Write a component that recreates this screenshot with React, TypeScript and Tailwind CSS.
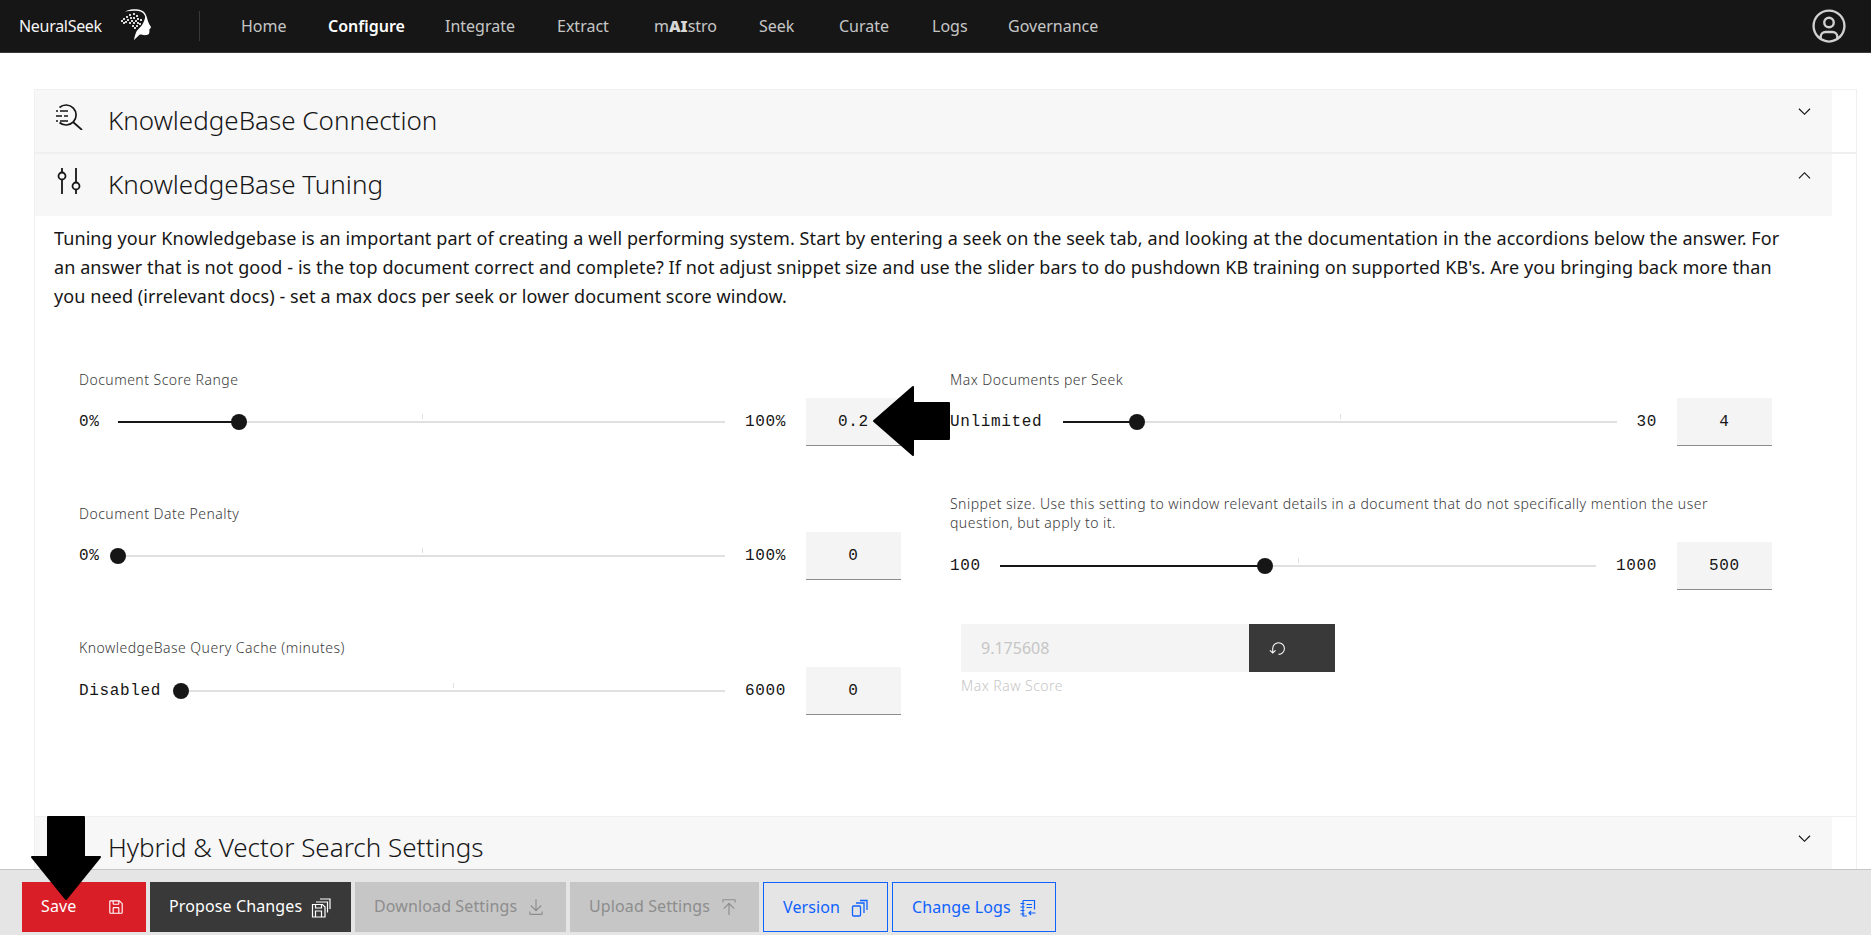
import type { ReactNode } from "react";

const SANS = "font-['Noto_Sans','Liberation_Sans',sans-serif]";
const MONO = "font-['Liberation_Mono',monospace]";

const navItems = [
  { label: <>Home</>, width: "w-[87px]" },
  { label: <span className="font-semibold text-white">Configure</span>, width: "w-[117px]" },
  { label: <>Integrate</>, width: "w-[112px]" },
  { label: <>Extract</>, width: "w-[97px]" },
  { label: <>m<span className="font-black text-[#d8d8d8]">AI</span>stro</>, width: "w-[105px]" },
  { label: <>Seek</>, width: "w-[80px]" },
  { label: <>Curate</>, width: "w-[93px]" },
  { label: <>Logs</>, width: "w-[76px]" },
  { label: <>Governance</>, width: "w-[100px]" },
];

function Icon({ size = 16, children, className }: { size?: number; children: ReactNode; className?: string }) {
  return (
    <svg width={size} height={size} viewBox="0 0 32 32" fill="currentColor" className={className} aria-hidden="true">
      {children}
    </svg>
  );
}

function SaveIcon() {
  return (
    <Icon size={18}>
      <path d="M27.71,9.29l-5-5A1,1,0,0,0,22,4H6A2,2,0,0,0,4,6V26a2,2,0,0,0,2,2H26a2,2,0,0,0,2-2V10A1,1,0,0,0,27.71,9.29ZM12,6h8v4H12Zm8,20H12V18h8Zm2,0V18a2,2,0,0,0-2-2H12a2,2,0,0,0-2,2v8H6V6h4v4a2,2,0,0,0,2,2h8a2,2,0,0,0,2-2V6.41l4,4V26Z" />
    </Icon>
  );
}

function SaveSeriesIcon() {
  return (
    <svg width="20" height="20" viewBox="0 0 20 20" fill="none" stroke="currentColor" strokeWidth="1.2" aria-hidden="true">
      <path d="M1.500 6.500h10l2.500 2.500V19H1.500z" />
      <path d="M4.500 6.500v3.500h6V6.500M4.500 19v-6h6v6" />
      <path d="M5 4h11.500v10.500M9 1h10v10" />
    </svg>
  );
}

function DownloadIcon() {
  return (
    <Icon size={18}>
      <path d="M26,24v4H6V24H4v4H4a2,2,0,0,0,2,2H26a2,2,0,0,0,2-2h0V24Z" />
      <path d="M26 14 24.59 12.59 17 20.17 17 2 15 2 15 20.17 7.41 12.59 6 14 16 24 26 14z" />
    </Icon>
  );
}

function UploadIcon() {
  return (
    <Icon size={18}>
      <path d="M6 18 7.41 19.41 15 11.83 15 30 17 30 17 11.83 24.59 19.41 26 18 16 8 6 18z" />
      <path d="M6,8V4H26V8h2V4a2,2,0,0,0-2-2H6A2,2,0,0,0,4,4V8Z" />
    </Icon>
  );
}

function VersionIcon() {
  return (
    <svg width="18" height="18" viewBox="0 0 18 18" fill="none" stroke="currentColor" strokeWidth="1.300" aria-hidden="true">
      <rect x="2.500" y="7" width="8" height="10" rx="1" />
      <path d="M6 4h8v10" />
      <path d="M10 1.500h7V11" />
    </svg>
  );
}

function ChangeLogIcon() {
  return (
    <svg width="18" height="18" viewBox="0 0 18 18" fill="none" stroke="currentColor" strokeWidth="1.200" aria-hidden="true">
      <path d="M4 1.500h11.500v9M8 17H4V1.500" />
      <path d="M1.500 4.500h4M1.500 8h4M1.500 11.500h4M1.500 15h4" />
      <path d="M7.500 5.500h5.500M7.500 8.500h5.500" />
      <path d="M16.500 14H10M12 12l-2 2 2 2" />
    </svg>
  );
}

function Chevron({ up }: { up?: boolean }) {
  return (
    <Icon size={19} className={up ? "rotate-180" : ""}>
      <path d="M16 22 6 12 7.400 10.600 16 19.200 24.600 10.600 26 12 16 22z" />
    </Icon>
  );
}

function Logo() {
  const dots = [
    [9, 5], [13, 4], [16, 6], [6, 7], [10, 8], [13, 8], [17, 9], [20, 10], [3, 9], [7, 10], [11, 11], [15, 11],
    [1, 11], [5, 12], [9, 13], [13, 13], [17, 13], [19, 14], [12, 16], [16, 16], [14, 18], [3, 13],
  ];
  return (
    <svg width="32" height="34" viewBox="0 0 32 34" aria-hidden="true">
      <path
        d="M5 2.500C9 .5 13 0 16.700.3 21 .8 24 2 25.500 5c1.800 3.500 2 7 3.800 10.300L31 18c-.2 1.300-1 1.800-1.700 2.300.3 1.400.2 3-.4 4.700-1.800 1.200-4 1.300-5.600 1-1.500-.2-2.800-.4-3.500-.5L14 31c.5-3.500 1.500-6.500 2.700-9 2.300-3 5.300-5 6.600-8.300C24.500 11 25.500 9 25 7c-1-3-4-4.500-6.700-5C14 1.300 9 1.800 5 2.500z"
        fill="#fff"
      />
      {dots.map(([x, y]) => (
        <rect key={`${x}-${y}`} x={x} y={y} width="2" height="2" fill="#d8d8d8" />
      ))}
    </svg>
  );
}

function ActionButton({
  className,
  iconLeft,
  textLeft,
  children,
  icon,
}: {
  className: string;
  iconLeft: string;
  textLeft: string;
  children: ReactNode;
  icon: ReactNode;
}) {
  return (
    <button type="button" className={`relative h-[50px] shrink-0 text-base tracking-[0.12px] ${className}`}>
      <span className={`absolute top-[12px] whitespace-nowrap leading-6 ${textLeft}`}>{children}</span>
      <span className={`absolute top-[16px] ${iconLeft}`}>{icon}</span>
    </button>
  );
}

function Slider({
  label,
  minLabel,
  maxLabel,
  value,
  percent,
  labelClass = "mb-[9px]",
  minWidth,
  maxWidth,
}: {
  label: string;
  minLabel: string;
  maxLabel: string;
  value: string;
  percent: number;
  labelClass?: string;
  minWidth: string;
  maxWidth: string;
}) {
  return (
    <div>
      <div className={`text-[14px] font-light leading-[19px] tracking-[0.48px] text-[#393939] ${labelClass}`}>{label}</div>
      <div className="flex h-[48px] items-center">
        <span className={`${MONO} shrink-0 text-base tracking-[0.65px] text-[#161616] ${minWidth}`}>{minLabel}</span>
        <div className="relative h-[2px] flex-1 bg-[#e0e0e0]">
          <div className="absolute inset-y-0 left-0 bg-[#161616]" style={{ width: `${percent}%` }} />
          <div className="absolute left-1/2 top-[-7px] h-[5px] w-px bg-[#e0e0e0]" />
          <div
            className="absolute top-[-7px] size-4 -translate-x-1/2 rounded-full bg-[#161616]"
            style={{ left: `${percent}%` }}
          />
        </div>
        <span className={`${MONO} shrink-0 text-right text-base tracking-[0.65px] text-[#161616] ${maxWidth}`}>{maxLabel}</span>
        <div
          className={`${MONO} ml-[20px] flex h-[48px] w-[95px] shrink-0 items-center justify-center border-b border-[#8d8d8d] bg-[#f4f4f4] text-base tracking-[0.65px] text-[#161616]`}
        >
          {value}
        </div>
      </div>
    </div>
  );
}

function AccordionHeader({ icon, title, up }: { icon: ReactNode; title: string; up?: boolean }) {
  return (
    <div className="relative flex h-[62px] w-[1797px] items-center bg-[#f7f7f7] pb-[2px] pl-[73px]">
      <div className="absolute left-[20px] top-[12px]">{icon}</div>
      <h2 className="text-[26px] font-light leading-8 text-[#161616]">{title}</h2>
      <div className="absolute left-[1760px] top-[12px] text-[#161616]">
        <Chevron up={up} />
      </div>
    </div>
  );
}

export default function App() {
  return (
    <div className={`${SANS} relative flex h-screen flex-col overflow-hidden bg-white`}>
      <header className="flex h-[53px] shrink-0 items-center border-b border-[#393939] bg-[#161616] pl-[19px] pr-[23px] text-base text-[#c6c6c6]">
        <span className="w-[101px] tracking-[-0.3px] text-[#f4f4f4]">NeuralSeek</span>
        <Logo />
        <div className="ml-[47px] mr-[41px] h-[30px] w-px bg-[#393939]" />
        <nav className="flex">
          {navItems.map((item, i) => (
            <a key={i} className={`${item.width} whitespace-nowrap`}>
              {item.label}
            </a>
          ))}
        </nav>
        <div className="ml-auto text-[#d0d0d0]">
          <Icon size={38}>
            <path d="M16,8a5,5,0,1,0,5,5A5,5,0,0,0,16,8Zm0,8a3,3,0,1,1,3-3A3.003,3.003,0,0,1,16,16Z" />
            <path d="M16,2A14,14,0,1,0,30,16,14.016,14.016,0,0,0,16,2ZM10,26.377V25a3.003,3.003,0,0,1,3-3h6a3.003,3.003,0,0,1,3,3v1.377a11.899,11.899,0,0,1-12,0Zm13.993-1.451A5.002,5.002,0,0,0,19,20H13a5.002,5.002,0,0,0-4.993,4.926,12,12,0,1,1,15.985,0Z" />
          </Icon>
        </div>
      </header>

      <main className="min-h-0 flex-1 overflow-hidden pl-[34px] pr-[14px] pt-[36px]">
        <div className="border-x border-t border-[#f0f0f0]">
          <AccordionHeader
            title="KnowledgeBase Connection"
            icon={
              <svg width="28" height="28" viewBox="0 0 28 28" fill="none" stroke="#161616" strokeWidth="1.700" aria-hidden="true">
                <path d="M4.500 5.500a10 10 0 1 1 0 15" />
                <path d="M18 20l9 8" />
                <path d="M1 9h2M5 9h8M1 14h6M9 14h4M1 19h2M5 19h8" />
              </svg>
            }
          />
          <div className="h-[2px] bg-[#f0f0f0]" />
          <AccordionHeader
            up
            title="KnowledgeBase Tuning"
            icon={
              <svg width="28" height="30" viewBox="0 0 28 30" fill="none" stroke="#161616" strokeWidth="1.800" aria-hidden="true">
                <path d="M7 2v4.500M7 13.500V28M21 2v14.500M21 23.500V28" />
                <circle cx="7" cy="10" r="3.500" />
                <circle cx="21" cy="20" r="3.500" />
              </svg>
            }
          />
          <div className="h-[600px] pl-[19px] pt-[8px]">
            <p className="text-lg leading-[29px] tracking-[0.09px] text-[#161616]">
              Tuning your Knowledgebase is an important part of creating a well performing system. Start by entering a seek on the seek tab, and looking at the documentation in the accordions below the answer. For
              <br />
              an answer that is not good - is the top document correct and complete? If not adjust snippet size and use the slider bars to do pushdown KB training on supported KB's. Are you bringing back more than
              <br />
              you need (irrelevant docs) - set a max docs per seek or lower document score window.
            </p>

            <div className="mt-[59px] flex pl-[25px]">
              <div className="flex w-[822px] flex-col gap-[58px]">
                <Slider label="Document Score Range" minLabel="0%" maxLabel="100%" value="0.2" percent={20} minWidth="w-[39px]" maxWidth="w-[61px]" />
                <Slider label="Document Date Penalty" minLabel="0%" maxLabel="100%" value="0" percent={0} minWidth="w-[39px]" maxWidth="w-[61px]" />
                <Slider label="KnowledgeBase Query Cache (minutes)" minLabel="Disabled" maxLabel="6000" value="0" percent={0} labelClass="mb-[10px]" minWidth="w-[102px]" maxWidth="w-[61px]" />
              </div>
              <div className="ml-[49px] w-[822px]">
                <Slider label="Max Documents per Seek" minLabel="Unlimited" maxLabel="30" value="4" percent={13.3} minWidth="w-[113px]" maxWidth="w-[40px]" />
                <div className="mt-[48px]">
                  <Slider
                    label="Snippet size. Use this setting to window relevant details in a document that do not specifically mention the user question, but apply to it."
                    minLabel="100"
                    maxLabel="1000"
                    value="500"
                    percent={44.4}
                    labelClass="mb-[10px] max-w-[790px]"
                    minWidth="w-[50px]"
                    maxWidth="w-[61px]"
                  />
                </div>
                <div className="ml-[11px] mt-[34px]">
                  <div className="flex h-[48px] w-[374px]">
                    <div className="flex w-[288px] items-center bg-[#f4f4f4] pl-[20px] text-base text-[#c6c6c6]">9.175608</div>
                    <div className="flex w-[86px] items-center bg-[#393939] pl-[20px] text-white">
                      <Icon size={17}>
                        <path d="M18,28A12,12,0,1,0,6,16v6.200L2.400,18.600,1,20l6,6,6-6-1.400-1.400L8,22.200V16H8A10,10,0,1,1,18,26Z" />
                      </Icon>
                    </div>
                  </div>
                  <div className="mt-[6px] text-[14px] font-light leading-4 tracking-[0.48px] text-[#c6c6c6]">Max Raw Score</div>
                </div>
              </div>
            </div>
          </div>
          <div className="h-px bg-[#f0f0f0]" />
          <AccordionHeader title="Hybrid &amp; Vector Search Settings" icon={null} />
        </div>
      </main>

      <footer className="flex h-[66px] shrink-0 gap-[4px] border-t border-[#c6c6c6] bg-[#e5e5e5] pl-[22px] pt-[12px]">
        <ActionButton className="w-[124px] bg-[#da1e28] text-white" textLeft="left-[19px]" iconLeft="left-[85px]" icon={<SaveIcon />}>
          Save
        </ActionButton>
        <ActionButton className="w-[201px] bg-[#393939] text-white" textLeft="left-[19px]" iconLeft="left-[161px]" icon={<SaveSeriesIcon />}>
          Propose Changes
        </ActionButton>
        <ActionButton className="w-[211px] bg-[#c6c6c6] text-[#8d8d8d]" textLeft="left-[19px]" iconLeft="left-[172px]" icon={<DownloadIcon />}>
          Download Settings
        </ActionButton>
        <ActionButton className="w-[189px] bg-[#c6c6c6] text-[#8d8d8d]" textLeft="left-[19px]" iconLeft="left-[150px]" icon={<UploadIcon />}>
          Upload Settings
        </ActionButton>
        <ActionButton className="w-[125px] border border-[#0f62fe] text-[#0f62fe]" textLeft="left-[19px]" iconLeft="left-[86px]" icon={<VersionIcon />}>
          Version
        </ActionButton>
        <ActionButton className="w-[164px] border border-[#0f62fe] text-[#0f62fe]" textLeft="left-[19px]" iconLeft="left-[126px]" icon={<ChangeLogIcon />}>
          Change Logs
        </ActionButton>
      </footer>

      {/* black annotation arrows drawn on top of the page */}
      <svg className="absolute left-[870px] top-[384px]" width="82" height="74" viewBox="0 0 82 74" aria-hidden="true">
        <path d="M4 37 43 3V19H79V55H43V71Z" fill="#000" stroke="#000" strokeWidth="2" strokeLinejoin="round" />
      </svg>
      <svg className="absolute left-[30px] top-[814px]" width="72" height="88" viewBox="0 0 72 88" aria-hidden="true">
        <path d="M18 3H54V43H70L36 85 2 43H18Z" fill="#000" stroke="#000" strokeWidth="2" strokeLinejoin="round" />
      </svg>
    </div>
  );
}
